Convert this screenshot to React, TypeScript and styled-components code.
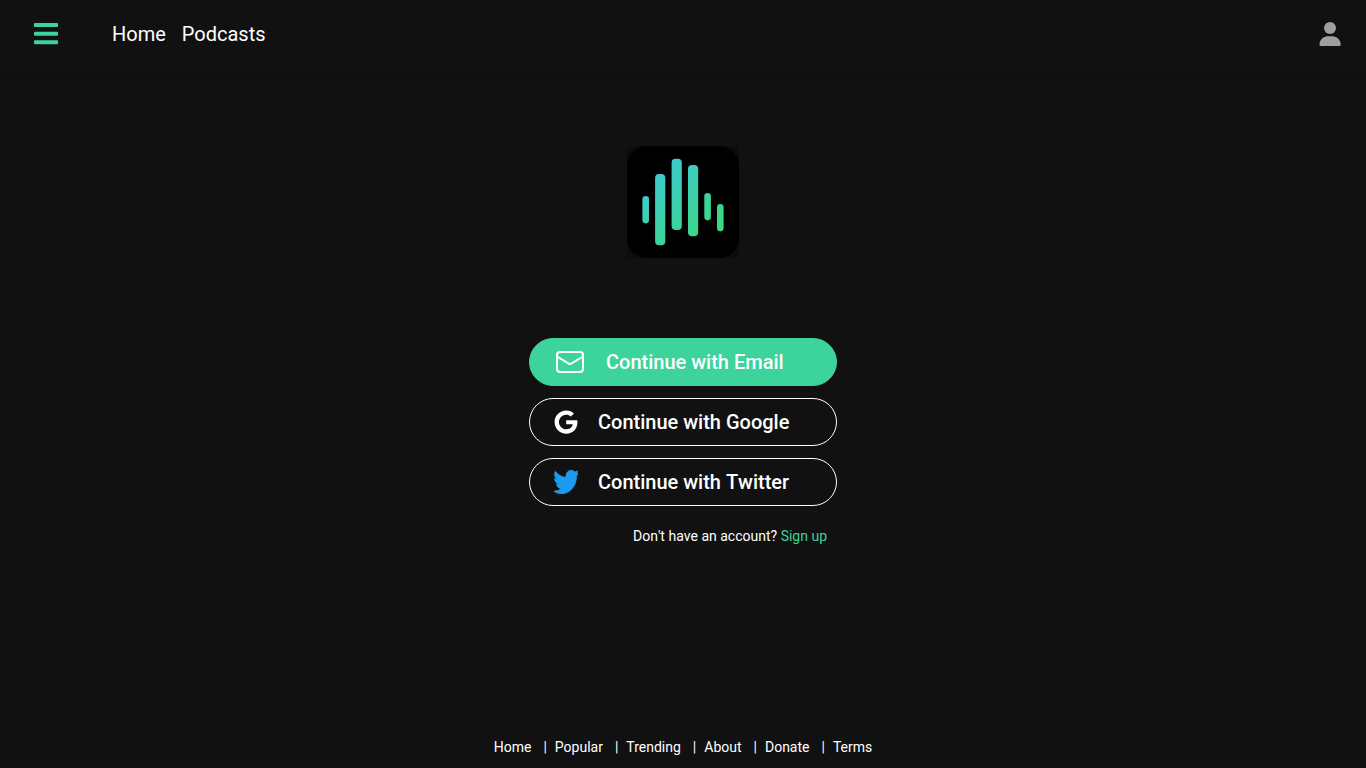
import React from "react";
import styled, { createGlobalStyle } from "styled-components";
import { FaGoogle } from "react-icons/fa";

const GlobalStyle = createGlobalStyle`
  *, *::before, *::after { box-sizing: border-box; }
  body {
    margin: 0;
    background: #111111;
    color: #ffffff;
    font-family: Roboto, "Liberation Sans", sans-serif;
  }
  a { color: inherit; text-decoration: none; }
  svg { display: block; flex: none; }
`;

const Page = styled.div`
  min-height: 100vh;
  display: flex;
  flex-direction: column;
`;

const Header = styled.header`
  display: flex;
  align-items: center;
  height: 68px;
  padding: 0 24px 0 34px;
  box-shadow: 0 4px 12px rgba(0, 0, 0, 0.04);
`;

const IconButton = styled.button`
  padding: 0;
  border: 0;
  background: none;
  color: inherit;
  cursor: pointer;
`;

const MainNav = styled.nav`
  display: flex;
  flex: 1;
  gap: 16px;
  margin-left: 54px;
  font-size: 20px;
  line-height: 24px;
`;

const Main = styled.main`
  flex: 1;
  display: flex;
  flex-direction: column;
  align-items: center;
  padding: 78px 16px 32px;
`;

const Panel = styled.section`
  display: flex;
  flex-direction: column;
  align-items: center;
  width: 100%;
  max-width: 308px;
  font-kerning: none;
`;

const LogoTile = styled.div`
  margin-bottom: 80px;
  background: #0c0c0c;
  border-radius: 2px;
`;

const Choices = styled.div`
  display: flex;
  flex-direction: column;
  gap: 12px;
  width: 100%;
`;

const ChoiceButton = styled.button<{ $primary?: boolean }>`
  display: flex;
  align-items: center;
  gap: 20px;
  width: 100%;
  height: 48px;
  padding: 0 24px;
  border: 1px solid ${(p) => (p.$primary ? "#3cd39c" : "#ffffff")};
  border-radius: 24px;
  background: ${(p) => (p.$primary ? "#3cd39c" : "transparent")};
  color: #ffffff;
  font-family: inherit;
  font-kerning: inherit;
  font-size: 20px;
  font-weight: 500;
  line-height: 24px;
  white-space: nowrap;
  cursor: pointer;
`;

const SignUp = styled.p`
  align-self: flex-end;
  margin: 22px 10px 0 0;
  font-size: 14px;
  line-height: 16px;
`;

const SignUpLink = styled.a`
  && { color: #3cd39c; }
`;

const Footer = styled.footer`
  padding: 0 16px 13px;
`;

const FooterList = styled.ul`
  display: flex;
  flex-wrap: wrap;
  justify-content: center;
  margin: 0;
  padding: 0;
  list-style: none;
  font-size: 14px;
  line-height: 16px;
`;

const FooterItem = styled.li`
  & + &::before {
    content: "|";
    margin: 0 8px 0 12px;
  }
`;

const MenuIcon = () => (
  <svg width="24" height="24" viewBox="0 0 24 24" fill="#3cd39c" aria-hidden="true">
    <rect x="0" y="1" width="24" height="4" rx="1" />
    <rect x="0" y="9.7" width="24" height="4" rx="1" />
    <rect x="0" y="18.2" width="24" height="4" rx="1" />
  </svg>
);

const PersonIcon = () => (
  <svg width="24" height="24" viewBox="0 0 24 24" fill="#9f9f9f" aria-hidden="true">
    <circle cx="12" cy="6" r="6" />
    <path d="M1.5 22.4C1.5 18 5.2 14.2 9.7 14.2h4.800c4.500 0 8.200 3.800 8.200 8.200 0 1-.6 1.600-1.600 1.600H3.100c-1 0-1.600-.6-1.600-1.600z" />
  </svg>
);

const MailIcon = () => (
  <svg width="32" height="32" viewBox="0 0 32 32" fill="none" stroke="#ffffff" strokeWidth="2" strokeLinejoin="round" aria-hidden="true">
    <rect x="3" y="6" width="26" height="20" rx="3" />
    <path d="M3 10.500l11.800 7.200q1.200.7 2.400 0L29 10.500" />
  </svg>
);

const TwitterIcon = () => (
  <svg width="24" height="24" viewBox="8 44 484 426" preserveAspectRatio="none" fill="#1d9bf0" stroke="#1d9bf0" strokeWidth="16" strokeLinejoin="round" aria-hidden="true">
    <path d="M459.370 151.716c.325 4.548.325 9.097.325 13.645 0 138.720-105.583 298.558-298.558 298.558-59.452 0-114.680-17.219-161.137-47.106 8.447.974 16.568 1.299 25.340 1.299 49.055 0 94.213-16.568 130.274-44.832-46.132-.975-84.792-31.188-98.112-72.772 6.498.974 12.995 1.624 19.818 1.624 9.421 0 18.843-1.300 27.614-3.573-48.081-9.747-84.143-51.980-84.143-102.985v-1.299c13.969 7.797 30.214 12.670 47.431 13.319-28.264-18.843-46.781-51.005-46.781-87.391 0-19.492 5.197-37.360 14.294-52.954 51.655 63.675 129.300 105.258 216.365 109.807-1.624-7.797-2.599-15.918-2.599-24.040 0-57.828 46.782-104.934 104.934-104.934 30.213 0 57.502 12.670 76.670 33.137 23.715-4.548 46.456-13.320 66.599-25.340-7.798 24.366-24.366 44.833-46.132 57.827 21.117-2.273 41.584-8.122 60.426-16.243-14.292 20.791-32.161 39.308-52.628 54.253z" />
  </svg>
);

const bars = [
  { x: 15.4, y: 50, w: 6.6, h: 27.4 },
  { x: 28.1, y: 28, w: 10.2, h: 71.3 },
  { x: 44.6, y: 12.7, w: 10.2, h: 71.4 },
  { x: 61, y: 19, w: 10.2, h: 71.3 },
  { x: 77.3, y: 47, w: 6.6, h: 27.4 },
  { x: 90, y: 58, w: 6.6, h: 27.4 },
];

const Logo = () => (
  <svg width="112" height="112" viewBox="0 0 112 112" role="img" aria-label="Logo">
    <defs>
      <linearGradient id="wave" gradientUnits="userSpaceOnUse" x1="30" y1="25" x2="85" y2="85">
        <stop offset="0" stopColor="#40c9d0" />
        <stop offset="1" stopColor="#3ad880" />
      </linearGradient>
    </defs>
    <rect width="112" height="112" rx="20" fill="#000000" />
    {bars.map((b) => (
      <rect key={b.x} x={b.x} y={b.y} width={b.w} height={b.h} rx={b.w > 8 ? 4 : 3.3} fill="url(#wave)" />
    ))}
  </svg>
);

const footerLinks = ["Home", "Popular", "Trending", "About", "Donate", "Terms"];

export default function App() {
  return (
    <Page>
      <GlobalStyle />
      <Header>
        <IconButton type="button" aria-label="Menu">
          <MenuIcon />
        </IconButton>
        <MainNav aria-label="Main">
          <a href="#home">Home</a>
          <a href="#podcasts">Podcasts</a>
        </MainNav>
        <IconButton type="button" aria-label="Account">
          <PersonIcon />
        </IconButton>
      </Header>
      <Main>
        <Panel>
          <LogoTile>
            <Logo />
          </LogoTile>
          <Choices>
            <ChoiceButton type="button" $primary>
              <MailIcon />
              Continue with Email
            </ChoiceButton>
            <ChoiceButton type="button">
              <FaGoogle size={24} aria-hidden="true" />
              Continue with Google
            </ChoiceButton>
            <ChoiceButton type="button">
              <TwitterIcon />
              Continue with Twitter
            </ChoiceButton>
          </Choices>
          <SignUp>
            Don't have an account? <SignUpLink href="#signup">Sign up</SignUpLink>
          </SignUp>
        </Panel>
      </Main>
      <Footer>
        <FooterList>
          {footerLinks.map((label) => (
            <FooterItem key={label}>
              <a href={`#${label.toLowerCase()}`}>{label}</a>
            </FooterItem>
          ))}
        </FooterList>
      </Footer>
    </Page>
  );
}
